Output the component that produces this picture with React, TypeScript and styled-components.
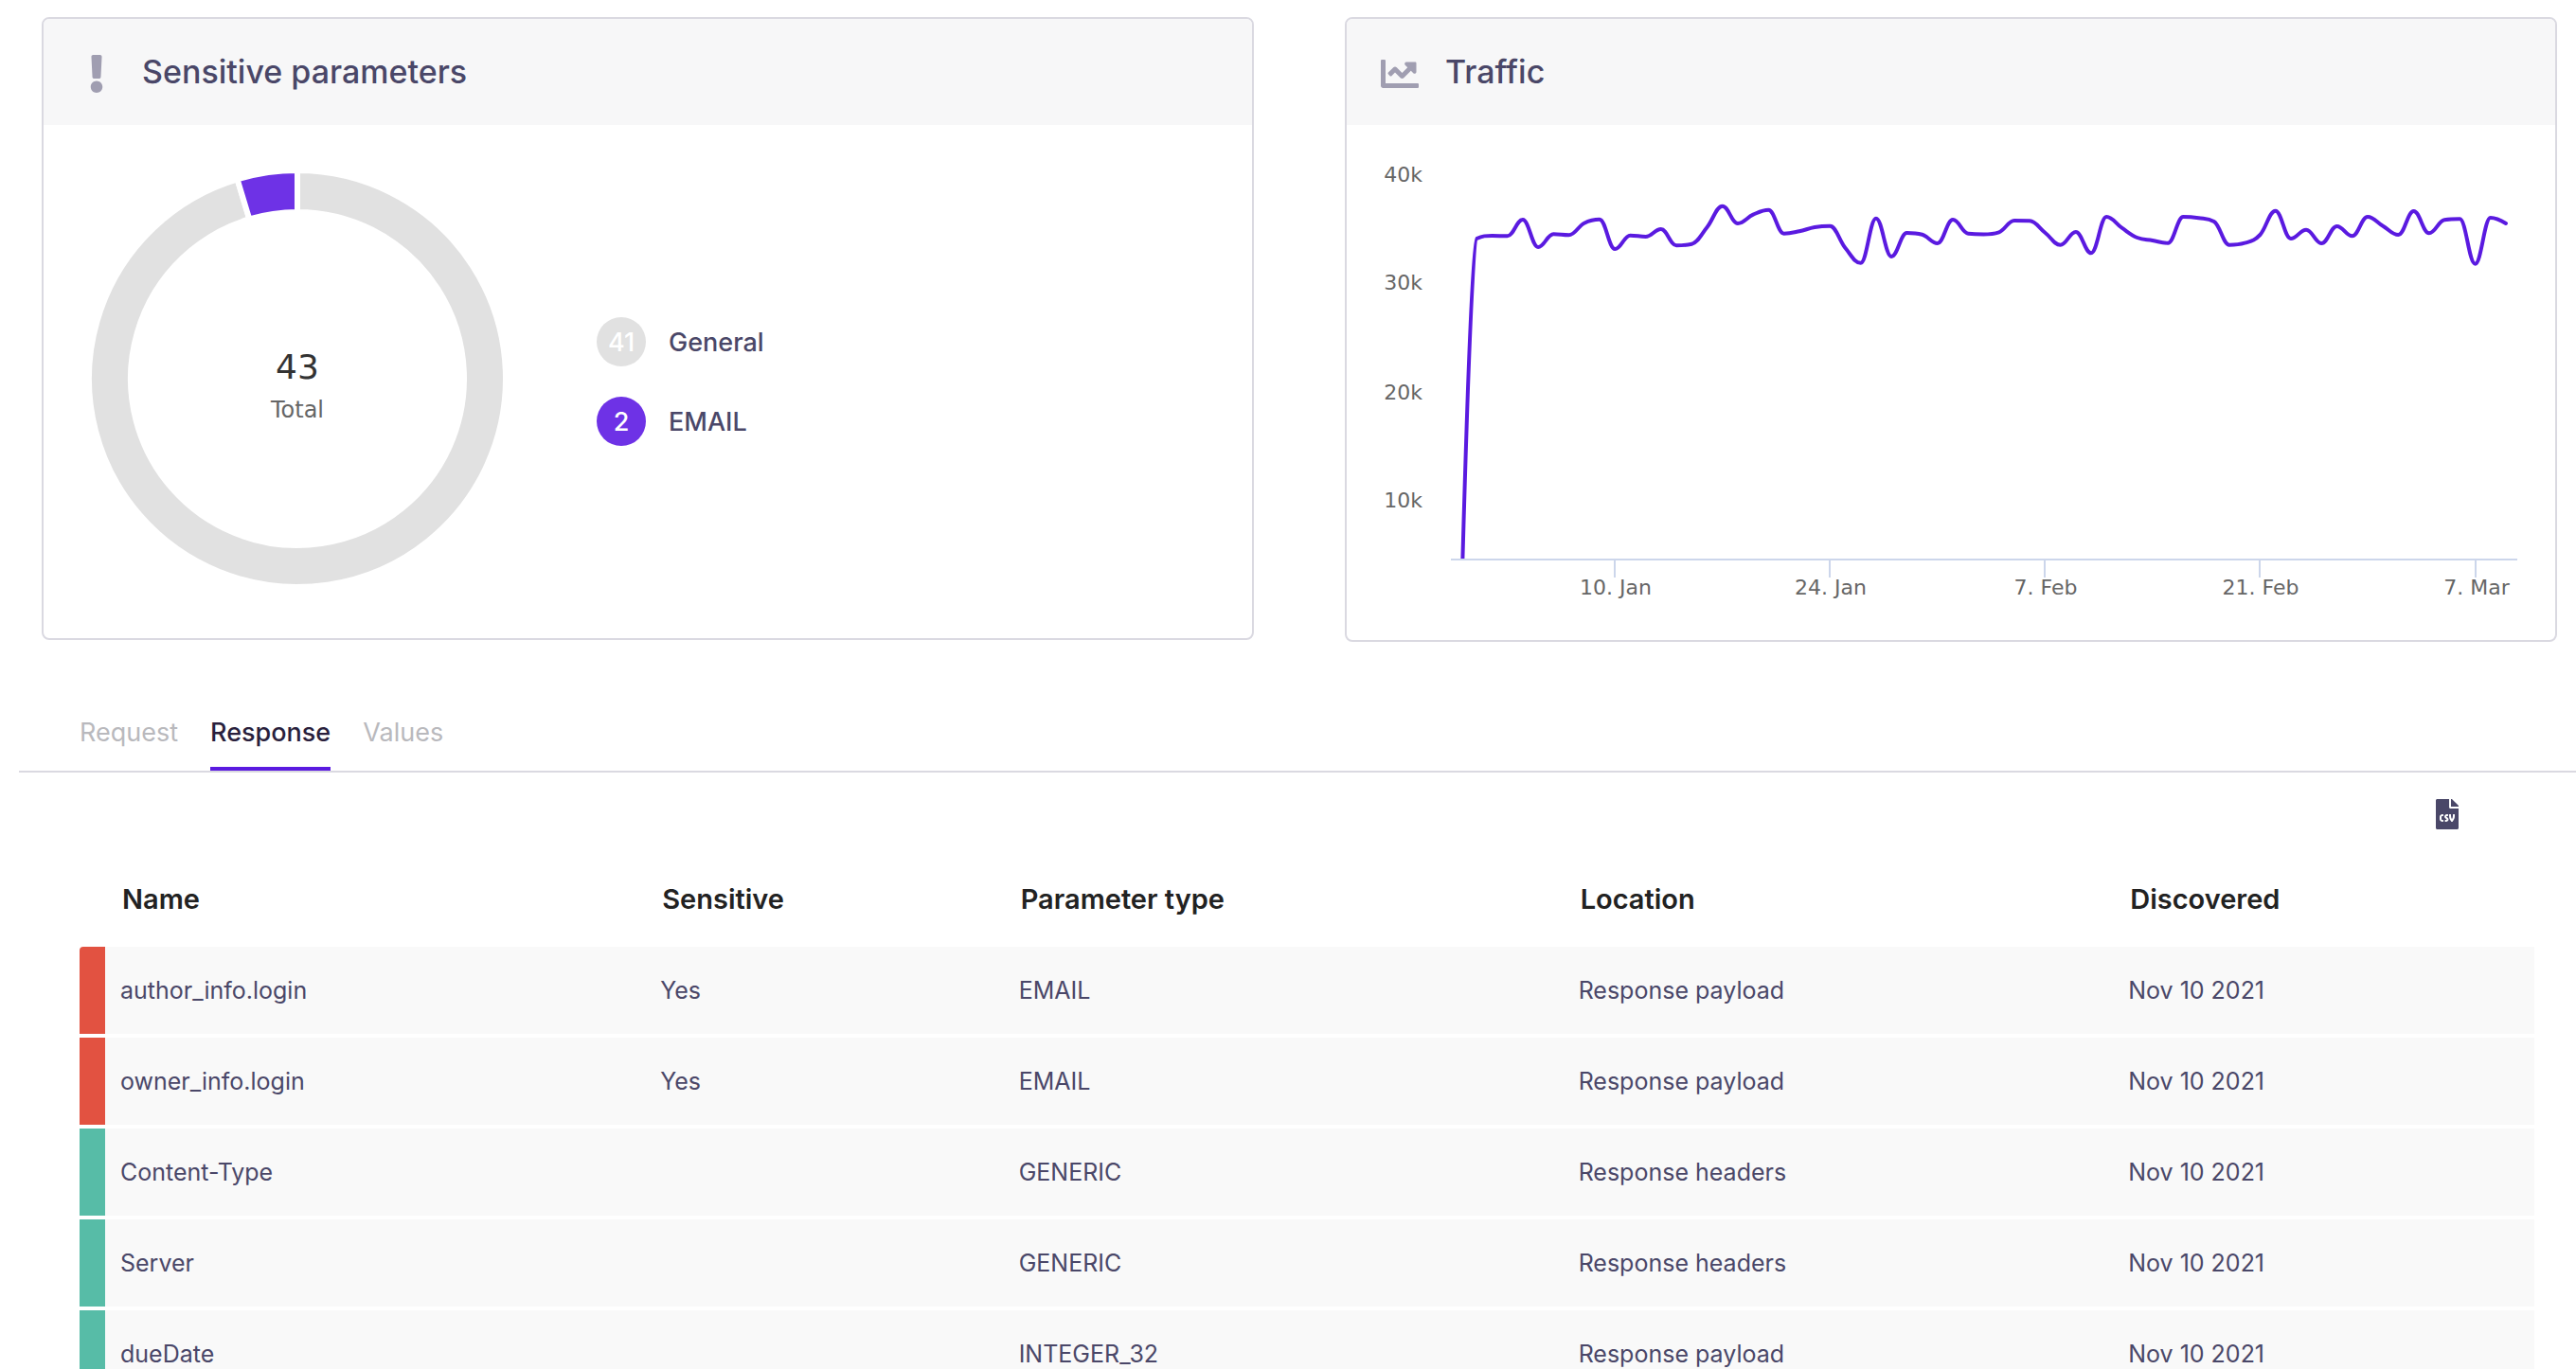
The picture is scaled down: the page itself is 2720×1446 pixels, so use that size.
import React, { useState } from "react";
import styled, { createGlobalStyle } from "styled-components";
import { FaChartLine, FaExclamation, FaFileCsv } from "react-icons/fa";

const color = {
  text: "#4a4768",
  icon: "#a09eb1",
  border: "#dad9e1",
  header: "#f7f7f8",
  row: "#f9f9f9",
  purple: "#6e32e6",
  line: "#5a1ae0",
  grey: "#e1e1e1",
  red: "#e25241",
  green: "#57bca7",
};

const chartFont = `"DejaVu Sans", sans-serif`;

const GlobalStyle = createGlobalStyle`
  *, *::before, *::after { box-sizing: border-box; }
  body {
    margin: 0;
    background: #fff;
    color: ${color.text};
    font-family: Inter, sans-serif;
  }
`;

const Page = styled.main`
  height: 100vh;
  overflow: hidden;
`;

const Cards = styled.div`
  display: grid;
  grid-template-columns: 1fr 1fr;
  align-items: start;
  gap: 96px;
  padding: 18px 20px 0 44px;
`;

const Card = styled.section`
  border: 2px solid ${color.border};
  border-radius: 8px;
  overflow: hidden;
  background: #fff;
`;

const CardHeader = styled.header`
  display: flex;
  align-items: center;
  gap: 28px;
  height: 112px;
  padding: 0 36px;
  background: ${color.header};
`;

const CardIcon = styled.span`
  display: flex;
  justify-content: center;
  width: 40px;
  padding-top: 4px;
  font-size: 40px;
  color: ${color.icon};
`;

const CardTitle = styled.h2`
  margin: 0;
  font-size: 34px;
  line-height: 48px;
  font-weight: 500;
`;

const DonutBody = styled.div`
  display: flex;
  align-items: center;
  gap: 96px;
  min-height: 542px;
  padding: 0 48px;
`;

const DonutSvg = styled.svg`
  width: 440px;
  height: 446px;
  flex: none;
  font-family: ${chartFont};
`;

const Legend = styled.ul`
  display: flex;
  flex-direction: column;
  gap: 32px;
  margin: 0;
  padding: 0;
  list-style: none;
`;

const LegendItem = styled.li`
  display: flex;
  align-items: center;
  gap: 24px;
  font-size: 27px;
  font-weight: 500;
`;

const Count = styled.span<{ $fill: string }>`
  display: flex;
  align-items: center;
  justify-content: center;
  width: 52px;
  height: 52px;
  border-radius: 50%;
  background: ${(p) => p.$fill};
  color: #fff;
`;

const TrafficSvg = styled.svg`
  display: block;
  width: 100%;
  height: auto;
  font-family: ${chartFont};
  font-size: 22px;
  fill: #666;
`;

const Tabs = styled.div`
  display: flex;
  gap: 34px;
  margin: 70px 0 0 20px;
  padding-left: 64px;
  border-bottom: 2px solid ${color.border};
`;

const Tab = styled.button<{ $active: boolean }>`
  padding: 6px 0 16px;
  border: 0;
  border-bottom: 4px solid ${(p) => (p.$active ? color.line : "transparent")};
  background: none;
  color: ${(p) => (p.$active ? "#2a1f3d" : "#b9b9bd")};
  font-family: inherit;
  font-size: 27px;
  line-height: 40px;
  font-weight: ${(p) => (p.$active ? 500 : 400)};
  cursor: pointer;
`;

const Panel = styled.div`
  padding: 0 44px 0 84px;
`;

const Toolbar = styled.div`
  display: flex;
  justify-content: flex-end;
  padding: 28px 76px 0 0;
`;

const ExportButton = styled.button`
  display: flex;
  padding: 0;
  border: 0;
  background: none;
  color: ${color.text};
  font-size: 32px;
  cursor: pointer;
`;

const Table = styled.table`
  width: 100%;
  table-layout: fixed;
  border-spacing: 0;
  text-align: left;
`;

const Col = styled.col<{ $width?: string }>`
  width: ${(p) => p.$width ?? "auto"};
`;

const Head = styled.th`
  height: 124px;
  padding: 24px 18px 0;
  color: #222;
  font-size: 29px;
  line-height: 40px;
  font-weight: 600;
  white-space: nowrap;
`;

const Cell = styled.td`
  height: 96px;
  padding: 0 16px;
  border-bottom: 4px solid #fff;
  background: ${color.row};
  font-size: 25px;
  line-height: 40px;
  white-space: nowrap;
`;

const StatusCell = styled.td<{ $sensitive: boolean }>`
  padding: 0;
  border-bottom: 4px solid #fff;
  background: ${(p) => (p.$sensitive ? color.red : color.green)};

  tr:first-child > & {
    border-top-left-radius: 4px;
  }
`;

const breakdown = [
  { name: "General", count: 41, fill: color.grey },
  { name: "EMAIL", count: 2, fill: color.purple },
];
const total = breakdown.reduce((sum, b) => sum + b.count, 0);

function slicePath(from: number, to: number) {
  const at = (r: number, share: number) => {
    const a = share * 2 * Math.PI;
    return `${220 + r * Math.sin(a)} ${220 - r * Math.cos(a)}`;
  };
  const large = to - from > 0.5 ? 1 : 0;
  return `M${at(220, from)}A220 220 0 ${large} 1 ${at(220, to)}L${at(176, to)}A176 176 0 ${large} 0 ${at(176, from)}Z`;
}

function Donut() {
  let start = 0;
  return (
    <DonutSvg viewBox="0 0 440 446" role="img" aria-label="Parameters by type">
      {breakdown.map((b) => {
        const from = start / total;
        start += b.count;
        return (
          <path key={b.name} d={slicePath(from, start / total)} fill={b.fill} stroke="#fff" strokeWidth={6} />
        );
      })}
      <text x={220} y={220} textAnchor="middle" fontSize={36} fill="#333">{total}</text>
      <text x={220} y={261} textAnchor="middle" fontSize={24} fill="#666">Total</text>
    </DonutSvg>
  );
}

// Daily points in chart units, from 31 Dec to 9 Mar.
const STEP = 16.22;
const FIRST_X = 121;
const BASELINE = 459;
const traffic = [
  512, 120, 117, 117.3, 100, 129, 115.3, 116.3, 103.7, 99.7, 131, 116.7, 118, 110, 127.3, 125.7, 108,
  85.7, 104, 94.7, 89.7, 114.7, 112.3, 108, 106.7, 130, 145.7, 98.7, 139, 114, 115.7, 125, 100, 114.7,
  115.4, 113.3, 101, 101.3, 113.7, 126.7, 113, 135.3, 97, 108.7, 119, 122, 124.7, 97, 98.3, 102, 126.7,
  124.7, 116, 90.7, 120, 110.7, 125, 107, 117.3, 97, 106.7, 116, 91, 114.3, 100.3, 99.3, 146.7, 98, 104,
];
const yLabels = [
  { text: "40k", y: 60 },
  { text: "30k", y: 174 },
  { text: "20k", y: 290 },
  { text: "10k", y: 404 },
];
const xLabels = [
  { text: "10. Jan", day: 10 },
  { text: "24. Jan", day: 24 },
  { text: "7. Feb", day: 38 },
  { text: "21. Feb", day: 52 },
  { text: "7. Mar", day: 66 },
];

// Smooth curve whose control points never overshoot the neighbouring values.
function splinePath(values: number[]) {
  const pts = values.map((y, i) => ({ x: FIRST_X + i * STEP, y }));
  let d = `M${pts[0].x} ${pts[0].y}`;
  let prev = pts[0];
  for (let i = 1; i < pts.length; i++) {
    const p = pts[i];
    const last = pts[i - 1];
    const next = pts[i + 1];
    let left = p;
    let right = p;
    if (next) {
      const lx = (1.5 * p.x + last.x) / 2.5;
      const rx = (1.5 * p.x + next.x) / 2.5;
      let ly = (1.5 * p.y + last.y) / 2.5;
      let ry = (1.5 * p.y + next.y) / 2.5;
      const fix = ((ry - ly) * (rx - p.x)) / (rx - lx) + p.y - ry;
      ly += fix;
      ry += fix;
      if (ly > last.y && ly > p.y) {
        ly = Math.max(last.y, p.y);
        ry = 2 * p.y - ly;
      } else if (ly < last.y && ly < p.y) {
        ly = Math.min(last.y, p.y);
        ry = 2 * p.y - ly;
      }
      if (ry > next.y && ry > p.y) {
        ry = Math.max(next.y, p.y);
        ly = 2 * p.y - ry;
      } else if (ry < next.y && ry < p.y) {
        ry = Math.min(next.y, p.y);
        ly = 2 * p.y - ry;
      }
      left = { x: lx, y: ly };
      right = { x: rx, y: ry };
    }
    d += `C${prev.x} ${prev.y} ${left.x} ${left.y} ${p.x} ${p.y}`;
    prev = right;
  }
  return d;
}

function TrafficChart() {
  return (
    <TrafficSvg viewBox="0 0 1276 544" role="img" aria-label="Traffic per day">
      <clipPath id="plot">
        <rect x={110} y={0} width={1126} height={458} />
      </clipPath>
      {yLabels.map((l) => (
        <text key={l.text} x={80} y={l.y} textAnchor="end">{l.text}</text>
      ))}
      <path d={`M110 ${BASELINE}H1236`} stroke="#ccd6eb" strokeWidth={2} />
      {xLabels.map((l) => {
        const x = Math.round(FIRST_X + l.day * STEP);
        return (
          <g key={l.text}>
            <path d={`M${x} ${BASELINE}V478`} stroke="#ccd6eb" strokeWidth={2} />
            <text x={x + 1} y={496} textAnchor="middle">{l.text}</text>
          </g>
        );
      })}
      <path
        d={splinePath(traffic)}
        clipPath="url(#plot)"
        fill="none"
        stroke={color.line}
        strokeWidth={4}
        strokeLinecap="round"
        strokeLinejoin="round"
      />
    </TrafficSvg>
  );
}

const tabs = ["Request", "Response", "Values"];

const rows = [
  { name: "author_info.login", sensitive: true, type: "EMAIL", location: "Response payload" },
  { name: "owner_info.login", sensitive: true, type: "EMAIL", location: "Response payload" },
  { name: "Content-Type", sensitive: false, type: "GENERIC", location: "Response headers" },
  { name: "Server", sensitive: false, type: "GENERIC", location: "Response headers" },
  { name: "dueDate", sensitive: false, type: "INTEGER_32", location: "Response payload" },
];

export default function App() {
  const [active, setActive] = useState("Response");
  return (
    <Page>
      <GlobalStyle />
      <Cards>
        <Card>
          <CardHeader>
            <CardIcon><FaExclamation /></CardIcon>
            <CardTitle>Sensitive parameters</CardTitle>
          </CardHeader>
          <DonutBody>
            <Donut />
            <Legend>
              {breakdown.map((b) => (
                <LegendItem key={b.name}>
                  <Count $fill={b.fill}>{b.count}</Count>
                  {b.name}
                </LegendItem>
              ))}
            </Legend>
          </DonutBody>
        </Card>
        <Card>
          <CardHeader>
            <CardIcon><FaChartLine /></CardIcon>
            <CardTitle>Traffic</CardTitle>
          </CardHeader>
          <TrafficChart />
        </Card>
      </Cards>

      <Tabs role="tablist">
        {tabs.map((t) => (
          <Tab key={t} type="button" role="tab" aria-selected={t === active} $active={t === active} onClick={() => setActive(t)}>
            {t}
          </Tab>
        ))}
      </Tabs>

      <Panel role="tabpanel">
        <Toolbar>
          <ExportButton type="button" aria-label="Export as CSV"><FaFileCsv /></ExportButton>
        </Toolbar>
        <Table>
          <colgroup>
            <Col $width="27px" />
            <Col $width="22%" />
            <Col $width="14.6%" />
            <Col $width="22.8%" />
            <Col $width="22.4%" />
            <Col />
          </colgroup>
          <thead>
            <tr>
              <td />
              <Head scope="col">Name</Head>
              <Head scope="col">Sensitive</Head>
              <Head scope="col">Parameter type</Head>
              <Head scope="col">Location</Head>
              <Head scope="col">Discovered</Head>
            </tr>
          </thead>
          <tbody>
            {rows.map((r) => (
              <tr key={r.name}>
                <StatusCell $sensitive={r.sensitive} />
                <Cell>{r.name}</Cell>
                <Cell>{r.sensitive ? "Yes" : ""}</Cell>
                <Cell>{r.type}</Cell>
                <Cell>{r.location}</Cell>
                <Cell>Nov 10 2021</Cell>
              </tr>
            ))}
          </tbody>
        </Table>
      </Panel>
    </Page>
  );
}
